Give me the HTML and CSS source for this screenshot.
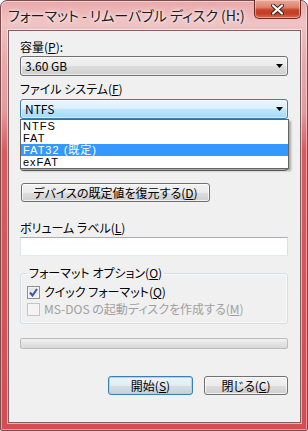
FILE: index.html
```html
<!DOCTYPE html>
<html lang="ja">
<head>
    <meta charset="UTF-8">
    <title>フォーマット</title>
    <link rel="stylesheet" href="styles.css">
</head>
<body>
<div class="window">
    <div class="titlebar">
        <span class="title">フォーマット - リムーバブル ディスク (H:)</span>
        <button class="close-btn">
            <svg width="13" height="11" viewBox="0 0 13 11">
                <path d="M2 1.5 L11 9.5 M11 1.5 L2 9.5" stroke="#3a2020" stroke-width="4" stroke-linecap="round"/>
                <path d="M2 1.5 L11 9.5 M11 1.5 L2 9.5" stroke="#fff" stroke-width="2.2" stroke-linecap="round"/>
            </svg>
        </button>
    </div>
    <div class="client">
        <div class="label">容量(<u>P</u>):</div>
        <div class="combo">
            <span>3.60 GB</span>
            <svg class="arrow" width="7" height="4" viewBox="0 0 7 4"><polygon points="0,0 7,0 3.5,4" fill="#000"/></svg>
        </div>

        <div class="label label-fs">ファイル システム(<u>F</u>)</div>
        <div class="combo-wrap">
            <div class="combo combo-focus">
                <span>NTFS</span>
                <svg class="arrow" width="7" height="4" viewBox="0 0 7 4"><polygon points="0,0 7,0 3.5,4" fill="#000"/></svg>
            </div>
            <ul class="dropdown">
                <li>NTFS</li>
                <li>FAT</li>
                <li class="selected">FAT32 (既定)</li>
                <li>exFAT</li>
            </ul>
        </div>

        <!-- アロケーション ユニット サイズ: hidden under the open list -->
        <div class="label label-alloc"></div>
        <div class="combo combo-alloc"></div>

        <button class="btn btn-restore">デバイスの既定値を復元する(<u>D</u>)</button>

        <div class="label label-vol">ボリューム ラベル(<u>L</u>)</div>
        <div class="textbox"></div>

        <fieldset class="options">
            <legend>フォーマット オプション(<u>O</u>)</legend>
            <label class="check">
                <span class="box">
                    <svg width="9" height="9" viewBox="0 0 9 9"><path d="M1 4.5 L3.5 7.5 L8 1" fill="none" stroke="#3b57a8" stroke-width="2"/></svg>
                </span>
                <span>クイック フォーマット(<u>Q</u>)</span>
            </label>
            <label class="check check-off">
                <span class="box"></span>
                <span>MS-DOS の起動ディスクを作成する(<u>M</u>)</span>
            </label>
        </fieldset>

        <div class="progress"></div>

        <div class="actions">
            <button class="btn btn-default">開始(<u>S</u>)</button>
            <button class="btn btn-close">閉じる(<u>C</u>)</button>
        </div>
    </div>
</div>
</body>
</html>
```

FILE: styles.css
```css
*{
    box-sizing: border-box;
}
body,ul,li{
    margin: 0;
    padding: 0;
}
ul{
    list-style: none;
}
body{
    font-family: "Noto Sans CJK JP", sans-serif;
    font-size: 12px;
    font-feature-settings: "palt";
    color: #000;
    background: #fff;
}
u{
    text-decoration: underline;
    text-underline-offset: 1px;
}
.window{
    width: 308px;
    height: 431px;
    display: flex;
    flex-direction: column;
    border: 1px solid #7a4a4c;
    border-radius: 7px 7px 2px 2px;
    background: linear-gradient(to bottom, #e9a8aa 0, #f1c2c4 22px, #e9a9ab 60px, #e49a9d 110px, #d95b5e 150px, #d64c50 100%);
    box-shadow: inset 0 0 0 1px rgba(255,255,255,0.45);
}
.titlebar{
    height: 29px;
    display: flex;
    align-items: flex-start;
    justify-content: space-between;
}
.title{
    padding: 5px 0 0 7px;
    font-size: 14px;
    line-height: 18px;
    color: #1b1b1b;
    text-shadow: 0 0 6px #fff, 0 0 3px #fff;
}
.close-btn{
    margin: -1px 6px 0 0;
    width: 47px;
    height: 19px;
    padding: 0;
    display: flex;
    align-items: center;
    justify-content: center;
    border: 1px solid #6b2a22;
    border-top: none;
    border-radius: 0 0 5px 5px;
    background: linear-gradient(to bottom, #eaa898 0, #dc8470 40%, #c7442b 55%, #c43d24 75%, #d86a4e 100%);
    box-shadow: inset 0 0 0 1px rgba(255,220,210,0.5);
}
.client{
    flex: 1;
    margin: 0 6px 7px 7px;
    padding: 9px 12px 0 11px;
    background: #f0f0f0;
    border: 1px solid #7d5f61;
    box-shadow: 0 0 0 1px rgba(255,255,255,0.55);
}
.label{
    height: 14px;
    line-height: 14px;
    white-space: nowrap;
}
.label-fs{
    margin-top: 6px;
}
.label-alloc{
    margin-top: 10px;
}
.label-vol{
    margin-top: 19px;
}
.combo{
    margin-top: 2px;
    height: 20px;
    display: flex;
    align-items: center;
    padding-left: 4px;
    border: 1px solid #707070;
    border-radius: 3px;
    background: linear-gradient(to bottom, #f2f2f2 0, #ebebeb 50%, #dddddd 51%, #cfcfcf 100%);
    box-shadow: inset 0 0 0 1px rgba(255,255,255,0.6);
    line-height: 14px;
}
.combo .arrow{
    margin-left: auto;
    margin-right: 4px;
}
.combo-wrap{
    position: relative;
    margin-top: 3px;
}
.combo-wrap .combo{
    margin-top: 0;
}
.combo-focus{
    border-color: #3c7fb1;
    background: linear-gradient(to bottom, #eaf6fd 0, #d9f0fc 50%, #bee6fd 51%, #a7d9f5 100%);
    box-shadow: inset 0 0 0 1px rgba(255,255,255,0.5);
}
.combo-alloc{
    margin-top: 8px;
}
.dropdown{
    position: absolute;
    z-index: 2;
    top: 100%;
    left: 0;
    width: 269px;
    background: #fff;
    border: 1px solid #646464;
    box-shadow: 2px 2px 2px rgba(0,0,0,0.3);
}
.dropdown li{
    height: 12px;
    line-height: 12px;
    padding-left: 2px;
    font-family: "Liberation Sans", "Noto Sans CJK JP", sans-serif;
    font-size: 11px;
    letter-spacing: 1px;
    font-feature-settings: normal;
}
.dropdown .selected{
    background: #3399ff;
    color: #fff;
}
.btn{
    display: block;
    height: 19px;
    padding: 0;
    font-family: inherit;
    font-size: 12px;
    font-feature-settings: "palt";
    line-height: 14px;
    color: #000;
    border: 1px solid #707070;
    border-radius: 3px;
    background: linear-gradient(to bottom, #f2f2f2 0, #ebebeb 50%, #dddddd 51%, #cfcfcf 100%);
    box-shadow: inset 0 0 0 1px rgba(255,255,255,0.7);
}
.btn-restore{
    margin: 12px 0 0 1px;
    width: 189px;
}
.textbox{
    margin-top: 2px;
    height: 19px;
    background: #fff;
    border: 1px solid;
    border-color: #abadb3 #dbdfe6 #e3e9ef #e2e3ea;
}
.options{
    margin: 10px 0 0;
    padding: 0 6px 7px;
    border: 1px solid #d5dfe5;
    border-radius: 3px;
    box-shadow: inset 0 0 0 1px rgba(255,255,255,0.6);
}
.options legend{
    padding: 0 2px;
    height: 14px;
    line-height: 14px;
}
.check{
    display: flex;
    align-items: center;
    gap: 4px;
    height: 14px;
    line-height: 14px;
    margin-top: 5px;
    white-space: nowrap;
}
.check + .check{
    margin-top: 3px;
}
.box{
    width: 13px;
    height: 13px;
    display: flex;
    align-items: center;
    justify-content: center;
    border: 1px solid #8e8f8f;
    background: linear-gradient(135deg, #dcdfe3 0, #f7f7f7 100%);
    box-shadow: inset 0 0 0 1px #f4f4f4;
}
.check-off{
    color: #a0a0a0;
}
.check-off .box{
    border-color: #c5c5c5;
    background: #f4f4f4;
    box-shadow: none;
}
.progress{
    margin-top: 14px;
    height: 11px;
    border: 1px solid #bcbcbc;
    border-radius: 2px;
    background: linear-gradient(to bottom, #f3f3f3 0, #e6e6e6 40%, #d9d9d9 100%);
}
.actions{
    margin-top: 27px;
    display: flex;
    justify-content: flex-end;
    gap: 11px;
}
.btn-default{
    width: 85px;
    border-color: #3c7fb1;
    box-shadow: inset 0 0 0 1px #9ed8f7;
    background: linear-gradient(to bottom, #eef4f8 0, #e4ecf1 50%, #d3dde4 51%, #c6d2da 100%);
}
.btn-close{
    width: 84px;
}
```
